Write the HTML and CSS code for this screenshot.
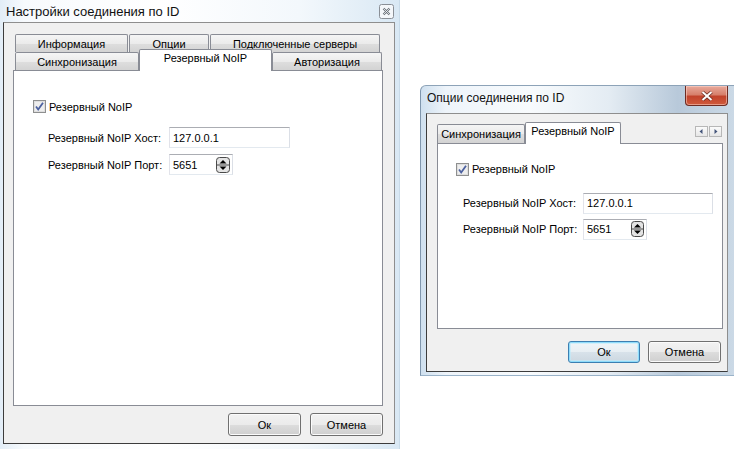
FILE: index.html
```html
<!DOCTYPE html>
<html lang="ru">
  <head>
    <meta charset="UTF-8" />
    <title>Настройки соединения по ID</title>
    <link rel="stylesheet" href="styles.css">
  </head>
  <body>
    <!-- Left dialog: multi-row tabs -->
    <div class="window win-settings">
      <div class="titlebar">
        <span class="title">Настройки соединения по ID</span>
        <span class="close-plain">
          <svg width="15" height="15" viewBox="0 0 15 15">
            <rect x="0.5" y="0.5" width="14" height="14" rx="2" fill="#f4f7fa" stroke="#8a8f96"/>
            <path d="M4.5 4.5 L10.5 10.5 M10.5 4.5 L4.5 10.5" stroke="#6b7078" stroke-width="2.2"/>
            <path d="M4.5 4.5 L10.5 10.5 M10.5 4.5 L4.5 10.5" stroke="#f4f7fa" stroke-width="0.8"/>
          </svg>
        </span>
      </div>

      <div class="client">
        <div class="tabs">
          <div class="tab-row">
            <div class="tab t-info">Информация</div>
            <div class="tab t-opts">Опции</div>
            <div class="tab t-servers">Подключенные серверы</div>
          </div>
          <div class="tab-row front">
            <div class="tab t-sync">Синхронизация</div>
            <div class="tab selected t-noip">Резервный NoIP</div>
            <div class="tab t-auth">Авторизация</div>
          </div>
          <div class="tab-panel">
            <label class="check-row">
              <span class="checkbox">
                <svg width="13" height="13" viewBox="0 0 13 13">
                  <rect x="0.5" y="0.5" width="12" height="12" fill="#dedede" stroke="#8e8f8f"/>
                  <rect x="2" y="2" width="9" height="9" fill="#eeeeee"/>
                  <path d="M3 6.5 L5.2 9.5 L10 2.8" fill="none" stroke="#4c61a0" stroke-width="1.8"/>
                </svg>
              </span>
              Резервный NoIP
            </label>
            <div class="form">
              <div class="form-row">
                <span class="field-label">Резервный NoIP Хост:</span>
                <div class="input host">127.0.0.1</div>
              </div>
              <div class="form-row">
                <span class="field-label">Резервный NoIP Порт:</span>
                <div class="input port">
                  5651
                  <svg class="spin" width="14" height="16" viewBox="0 0 14 16">
                    <rect x="0.5" y="0.5" width="13" height="15" rx="3" fill="#e4e4e4" stroke="#4a4a4a"/>
                    <line x1="1" y1="8" x2="13" y2="8" stroke="#4a4a4a"/>
                    <path d="M3.5 6.5 L7 3 L10.5 6.5Z" fill="#000"/>
                    <path d="M3.5 9.5 L7 13 L10.5 9.5Z" fill="#000"/>
                  </svg>
                </div>
              </div>
            </div>
          </div>
          <div class="buttons">
            <button class="btn">Ок</button>
            <button class="btn">Отмена</button>
          </div>
        </div>
      </div>
    </div>

    <!-- Right dialog: single-row tabs with scroll arrows -->
    <div class="window win-options">
      <div class="titlebar">
        <span class="title">Опции соединения по ID</span>
        <span class="close-red">
          <svg width="16" height="12" viewBox="0 0 16 12">
            <path d="M3.5 2 L12.5 10 M12.5 2 L3.5 10" stroke="#6a2a20" stroke-width="3.6"/>
            <path d="M3.5 2 L12.5 10 M12.5 2 L3.5 10" stroke="#ffffff" stroke-width="2"/>
          </svg>
        </span>
      </div>

      <div class="client">
        <div class="tabs">
          <div class="tab-row single">
            <div class="tab t-sync2">Синхронизация</div>
            <div class="tab selected t-noip2">Резервный NoIP</div>
            <div class="scroll-arrows">
              <span class="arrow"><svg width="11" height="9" viewBox="0 0 11 9"><path d="M6.5 2 L3.5 4.5 L6.5 7Z" fill="#44557a"/></svg></span>
              <span class="arrow"><svg width="11" height="9" viewBox="0 0 11 9"><path d="M4.5 2 L7.5 4.5 L4.5 7Z" fill="#44557a"/></svg></span>
            </div>
          </div>
          <div class="tab-panel">
            <label class="check-row">
              <span class="checkbox">
                <svg width="13" height="13" viewBox="0 0 13 13">
                  <rect x="0.5" y="0.5" width="12" height="12" fill="#dedede" stroke="#8e8f8f"/>
                  <rect x="2" y="2" width="9" height="9" fill="#eeeeee"/>
                  <path d="M3 6.5 L5.2 9.5 L10 2.8" fill="none" stroke="#4c61a0" stroke-width="1.8"/>
                </svg>
              </span>
              Резервный NoIP
            </label>
            <div class="form">
              <div class="form-row">
                <span class="field-label">Резервный NoIP Хост:</span>
                <div class="input host">127.0.0.1</div>
              </div>
              <div class="form-row">
                <span class="field-label">Резервный NoIP Порт:</span>
                <div class="input port">
                  5651
                  <svg class="spin" width="13" height="16" viewBox="0 0 13 16">
                    <rect x="0.5" y="0.5" width="12" height="15" rx="3" fill="#e4e4e4" stroke="#4a4a4a"/>
                    <line x1="1" y1="8" x2="12" y2="8" stroke="#4a4a4a"/>
                    <path d="M3 6.5 L6.5 3 L10 6.5Z" fill="#000"/>
                    <path d="M3 9.5 L6.5 13 L10 9.5Z" fill="#000"/>
                  </svg>
                </div>
              </div>
            </div>
          </div>
          <div class="buttons">
            <button class="btn default">Ок</button>
            <button class="btn">Отмена</button>
          </div>
        </div>
      </div>
    </div>
  </body>
</html>
```

FILE: styles.css
```css
/* Reset */
* {
  margin: 0;
  padding: 0;
  box-sizing: border-box;
}

body {
  width: 734px;
  height: 449px;
  position: relative;
  overflow: hidden;
  background: #fff;
  font-family: 'Liberation Sans', Arial, sans-serif;
  font-size: 11px;
  color: #000;
}

/* Windows on the desktop */
.window {
  position: absolute;
  display: flex;
  flex-direction: column;
}

.win-settings {
  left: 0;
  top: 0;
  width: 400px;
  height: 449px;
  padding: 0 4px 0 3px;
  background: linear-gradient(90deg, #e2edf7 0%, #f7fafd 6%, #ffffff 40%, #f3f8fc 75%, #d9e8f4 100%);
  border-right: 1px solid #c9dbe9;
}

.win-options {
  left: 420px;
  top: 85px;
  width: 314px;
  height: 291px;
  padding: 0 6px 3px 5px;
  background: linear-gradient(90deg, #cfe0ef 0%, #eef4fa 8%, #f8fbfd 35%, #e4ecf3 60%, #b8c9da 82%, #cbd9e6 100%);
  border-left: 1px solid #7f96ad;
  border-top: 1px solid #8da3b8;
  border-bottom: 1px solid #9ab3c9;
  border-top-left-radius: 6px;
}

.titlebar {
  display: flex;
  justify-content: space-between;
  align-items: center;
}

.win-settings .titlebar {
  height: 22px;
  padding-left: 3px;
  padding-right: 1px;
}

.win-options .titlebar {
  height: 27px;
  padding-left: 1px;
  align-items: flex-start;
}

.title {
  font-family: 'Liberation Sans', Arial, sans-serif;
  font-size: 13px;
  color: #111;
  white-space: nowrap;
}

.win-options .title {
  margin-top: 5px;
  font-size: 12px;
}

.close-plain {
  display: flex;
}

.close-red {
  width: 43px;
  height: 20px;
  display: flex;
  align-items: center;
  justify-content: center;
  border: 1px solid #6e2b22;
  border-top: none;
  border-radius: 0 0 4px 4px;
  background: linear-gradient(#e8a99b 0%, #d7806c 45%, #c2432c 55%, #cf5a3c 100%);
  box-shadow: inset 0 0 0 1px rgba(255, 220, 210, 0.5);
}

/* Client area */
.client {
  display: flex;
  flex-direction: column;
  background: #f0f0f0;
  border: 1px solid;
  border-color: #8e8e8e #8e8e8e #3c3c3c #3c3c3c;
}

.win-settings .client {
  height: 422px;
  padding: 11px 0 0 9px;
}

.win-options .client {
  height: 260px;
  padding: 7px 0 0 10px;
}

/* Tabs */
.win-settings .tabs {
  width: 370px;
}

.win-options .tabs {
  width: 286px;
}

.tab-row {
  display: flex;
  align-items: flex-end;
  height: 18px;
  padding-left: 2px;
}

.tab-row.single {
  height: 22px;
  padding-left: 0;
}

.tab {
  height: 18px;
  display: flex;
  align-items: center;
  justify-content: center;
  border: 1px solid #898c95;
  border-bottom: none;
  border-radius: 2px 2px 0 0;
  background: linear-gradient(#f5f5f5 0%, #ebebeb 50%, #dedede 51%, #d3d3d3 100%);
  white-space: nowrap;
}

.tab.selected {
  height: 22px;
  margin-bottom: -1px;
  padding-bottom: 5px;
  position: relative;
  z-index: 1;
  background: #fff;
}

.t-info { width: 113px; margin-right: 1px; }
.t-opts { width: 80px; margin-right: 1px; }
.t-servers { width: 170px; }
.t-sync { width: 124px; }
.t-noip { width: 133px; }
.t-auth { width: 110px; }

.t-sync2 { width: 88px; height: 19px; }
.t-noip2 { width: 96px; height: 23px; padding-bottom: 3px; }

.scroll-arrows {
  display: flex;
  gap: 1px;
  margin-left: auto;
  margin-right: 1px;
  align-self: flex-start;
  margin-top: 5px;
}

.arrow {
  width: 13px;
  height: 11px;
  display: flex;
  align-items: center;
  justify-content: center;
  border: 1px solid #b7b7b7;
  background: linear-gradient(#fbfbfb, #e6e6e6);
}

.tab-panel {
  border: 1px solid #898c95;
  background: #fff;
}

.win-settings .tab-panel {
  height: 336px;
  padding: 29px 0 0 19px;
}

.win-options .tab-panel {
  height: 186px;
  padding: 19px 0 0 18px;
}

.check-row {
  display: flex;
  align-items: center;
  gap: 3px;
  height: 13px;
}

.checkbox {
  display: flex;
}

.form-row {
  display: flex;
  align-items: center;
}

.win-settings .form {
  margin-top: 14px;
  padding-left: 15px;
}

.win-options .form {
  margin-top: 17px;
  padding-left: 7px;
}

.win-settings .form-row + .form-row {
  margin-top: 6px;
}

.win-options .form-row + .form-row {
  margin-top: 5px;
}

.field-label {
  width: 121px;
  white-space: nowrap;
}

.win-options .field-label {
  width: 120px;
}

.input {
  height: 21px;
  display: flex;
  align-items: center;
  justify-content: space-between;
  padding: 0 2px 0 3px;
  background: #fff;
  border: 1px solid;
  border-color: #abadb3 #dbdfe6 #e3e9ef #e2e3ea;
}

.win-settings .host { width: 121px; }
.win-options .host { width: 130px; }
.port { width: 64px; }

/* Dialog buttons */
.buttons {
  display: flex;
  justify-content: flex-end;
}

.win-settings .buttons {
  gap: 9px;
  margin-top: 7px;
}

.win-options .buttons {
  gap: 8px;
  margin-top: 12px;
  padding-right: 2px;
}

.btn {
  width: 73px;
  height: 23px;
  font-family: 'Liberation Sans', Arial, sans-serif;
  font-size: 11px;
  color: #000;
  border: 1px solid #707070;
  border-radius: 3px;
  background: linear-gradient(#f2f2f2 0%, #ebebeb 50%, #dddddd 51%, #cfcfcf 100%);
  box-shadow: inset 0 0 0 1px #fbfbfb;
}

.win-options .btn {
  height: 22px;
}

.btn.default {
  width: 72px;
  border-color: #3c7fb1;
  box-shadow: inset 0 0 0 1px #8fdcfb, inset 0 0 0 2px rgba(190, 235, 252, 0.6);
  background: linear-gradient(#f0f5f8 0%, #e7eef3 50%, #d8e2ea 51%, #ccd7e0 100%);
}
```
